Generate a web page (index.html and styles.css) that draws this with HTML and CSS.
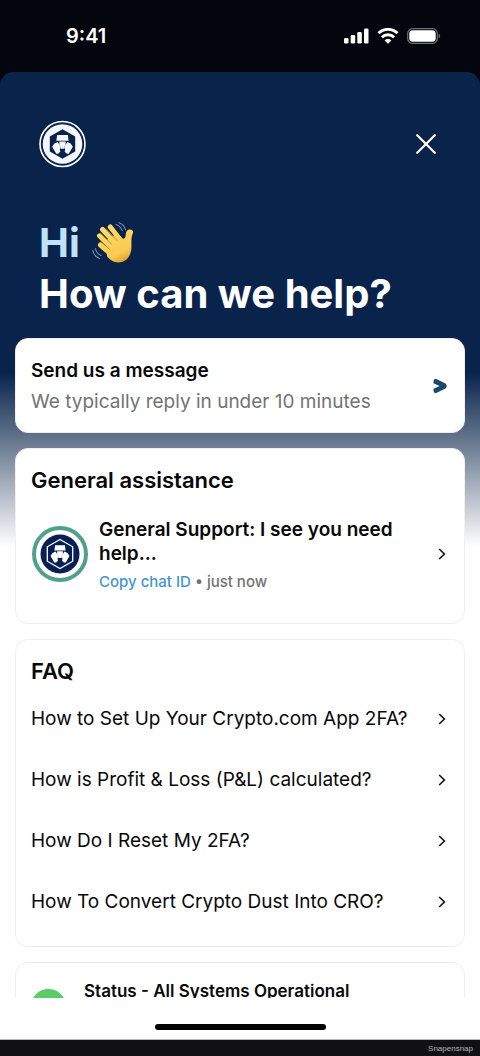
FILE: index.html
```html
<!DOCTYPE html>
<html lang="en">

<head>
    <meta charset="UTF-8">
    <meta name="viewport" content="width=device-width, initial-scale=1.0">
    <title>Help</title>
    <link rel="stylesheet" href="styles.css">
</head>

<body>
    <!-- Shared icons -->
    <svg class="sprite" aria-hidden="true">
        <symbol id="chevron" viewBox="0 0 8 12">
            <path d="M1.2 1 6.4 6 1.2 11" fill="none" stroke="#111" stroke-width="1.6" />
        </symbol>
        <symbol id="lion" viewBox="0 0 24 26">
            <path d="M6.400 3.500h11.200l.8 6H5.600z" />
            <path d="M8.700 10.500h6.600v3.500l-1.200 1.500V18H9.900v-2.500L8.700 14z" />
            <path d="M3.500 12.500 7 10.800l3.100 5.200-.9 2.600.5 2.400-2.200 2.200H5.500L1.200 15.800z" />
            <path d="M20.500 12.500 17 10.800l-3.100 5.200.9 2.600-.5 2.400 2.200 2.200h2l4.300-7.400z" />
        </symbol>
    </svg>

    <div class="status-bar">
        <span class="time">9:41</span>
        <div class="indicators">
            <svg width="25" height="16" viewBox="0 0 25 16" fill="#fff">
                <rect x="0" y="10" width="4.500" height="5.500" rx="1.300" />
                <rect x="6.700" y="7" width="4.500" height="8.500" rx="1.300" />
                <rect x="13.300" y="4" width="4.500" height="11.500" rx="1.300" />
                <rect x="20" y="0.500" width="4.500" height="15" rx="1.300" />
            </svg>
            <svg width="22" height="16" viewBox="0 0 22 16" fill="none" stroke="#fff" stroke-width="2.900">
                <path d="M1.500 5.300a13.400 13.400 0 0 1 19 0" />
                <path d="M4.900 9.200a8.700 8.700 0 0 1 12.200 0" />
                <path d="M11 15.800 7.600 12.400a4.800 4.800 0 0 1 6.800 0z" fill="#fff" stroke="none" />
            </svg>
            <svg width="34" height="16" viewBox="0 0 34 16">
                <rect x="0.700" y="0.700" width="29.600" height="14.600" rx="4.800" fill="none" stroke="#707277" stroke-width="1.200" />
                <rect x="2.300" y="2.300" width="26.400" height="11.400" rx="3.500" fill="#fff" />
                <path d="M31.700 5.500q3 2.500 0 5z" fill="#707277" />
            </svg>
        </div>
    </div>

    <main class="sheet">
        <header class="top">
            <svg class="logo" viewBox="0 0 48 48">
                <circle cx="24.500" cy="24" r="22.500" fill="none" stroke="#fff" stroke-width="1.600" />
                <circle cx="24.500" cy="24" r="19.800" fill="#f4f8fd" />
                <path d="M24.500 9.300 37.200 16.600v14.800L24.500 38.700 11.800 31.400V16.600z" fill="#09234d" />
                <use href="#lion" x="13" y="11.500" width="23" height="25" fill="#f4f8fd" />
            </svg>
            <button class="close" type="button" aria-label="Close">
                <svg width="20" height="20" viewBox="0 0 20 20">
                    <path d="M1.200 1.200l17.600 17.600M18.800 1.200 1.200 18.800" stroke="#fff" stroke-width="2.200" stroke-linecap="round" />
                </svg>
            </button>
        </header>

        <h1 class="greeting">
            <span class="hi">Hi
                <svg class="wave" viewBox="0 0 42 42" role="img" aria-label="waving hand">
                    <defs>
                        <linearGradient id="skin" gradientUnits="userSpaceOnUse" x1="10" y1="5" x2="30" y2="42">
                            <stop offset="0" stop-color="#ffdc6c" />
                            <stop offset="0.75" stop-color="#fbca50" />
                            <stop offset="1" stop-color="#dc9a30" />
                        </linearGradient>
                    </defs>
                    <g stroke="url(#skin)" stroke-width="5" stroke-linecap="round">
                        <path d="M7.500 13.800 22 28M10.500 7.500 26 24M18.300 5 30 20M8.500 23 20 33" />
                    </g>
                    <path d="M14 18.500 25 11.500l5.500 5c1.800.7 3-.7 3.200-3.200.2-3.500 1.300-5.800 4-5.800 3 0 4 1.800 3 4.200-1.800 4.300-1.100 8.300-1.300 14C39 35.500 33 40.500 26.500 40.500c-5 0-8.500-3-11.500-6z" fill="url(#skin)" />
                    <path d="M8.500 11.300 20 22.500M14 6.800 25 18.500M8.500 19l9 8.300" fill="none" stroke="#b98425" stroke-width="0.900" stroke-linecap="round" />
                    <g fill="none" stroke="#8190a5" stroke-width="1.100" stroke-linecap="round">
                        <path d="M24 2.500c3 1 5 3 6.200 6M27 .7c3.500 1.200 5.600 3.600 6.500 7M3.500 26.500c.5 3.500 2.200 5.600 5.500 7M.8 28.500C1.500 32.500 3.700 35 7.500 36.500" />
                    </g>
                </svg>
            </span>
            <span class="question">How can we help?</span>
        </h1>

        <a class="card message" href="#message">
            <span class="message-text">
                <strong class="item-title">Send us a message</strong>
                <span class="reply-time">We typically reply in under 10 minutes</span>
            </span>
            <svg class="send" viewBox="0 0 14 16">
                <path d="M2.800.8 12.500 5.500q2.500 2.500 0 5L2.800 15.200Q.5 15 .5 12.800V10.800L6.500 8 .5 5.200V3.200Q.5 1 2.800.8z" fill="#1b4868" />
            </svg>
        </a>

        <section class="card assistance">
            <h2>General assistance</h2>
            <div class="chat">
                <svg class="avatar" viewBox="0 0 56 56">
                    <circle cx="28" cy="28" r="26" fill="#fff" stroke="#4fa18b" stroke-width="4" />
                    <circle cx="28" cy="28" r="19.500" fill="#071f55" />
                    <path d="M28 13.500 40.700 20.800v14.400L28 42.500 15.300 35.200V20.800z" fill="none" stroke="#fff" stroke-width="1.300" />
                    <use href="#lion" x="17.500" y="16" width="21" height="23" fill="#fff" />
                </svg>
                <div class="chat-text">
                    <a class="item-title" href="#chat">General Support: I see you need help...</a>
                    <p class="meta"><a href="#copy">Copy chat ID</a> • just now</p>
                </div>
                <svg class="chevron"><use href="#chevron" /></svg>
            </div>
        </section>

        <section class="card faq">
            <h2>FAQ</h2>
            <ul>
                <li><a href="#2fa">How to Set Up Your Crypto.com App 2FA? <svg class="chevron"><use href="#chevron" /></svg></a></li>
                <li><a href="#pnl">How is Profit &amp; Loss (P&amp;L) calculated? <svg class="chevron"><use href="#chevron" /></svg></a></li>
                <li><a href="#reset">How Do I Reset My 2FA? <svg class="chevron"><use href="#chevron" /></svg></a></li>
                <li><a href="#dust">How To Convert Crypto Dust Into CRO? <svg class="chevron"><use href="#chevron" /></svg></a></li>
            </ul>
        </section>

        <section class="card system">
            <span class="dot"></span>
            <span class="system-text">Status - All Systems Operational</span>
        </section>
    </main>

    <div class="home-area">
        <div class="home-bar"></div>
    </div>
    <footer class="credit">Snapensnap</footer>
</body>

</html>
```
FILE: styles.css
```css
* {
    box-sizing: border-box;
}

body {
    margin: 0;
    height: 100vh;
    display: flex;
    flex-direction: column;
    background-color: #04060d;
    color: #080808;
    font-family: Inter, "Liberation Sans", sans-serif;
}

h1,
h2,
p,
ul {
    margin: 0;
    padding: 0;
}

a {
    color: inherit;
    text-decoration: none;
}

svg {
    display: block;
    flex-shrink: 0;
}

.sprite {
    position: absolute;
    width: 0;
    height: 0;
}

/* Status bar */
.status-bar {
    flex: 0 0 72px;
    display: flex;
    justify-content: space-between;
    align-items: center;
    padding: 0 39px 0 66px;
    color: #fff;
}

.time {
    font-size: 20px;
    font-weight: 600;
}

.indicators {
    display: flex;
    gap: 8px;
}

/* Sheet */
.sheet {
    flex: 1;
    min-height: 0;
    overflow: hidden;
    display: flex;
    flex-direction: column;
    gap: 15px;
    padding: 48px 15px 0;
    border-radius: 14px 14px 0 0;
    background: linear-gradient(#09234b 300px, #68788f 370px, #fff 475px);
}

.sheet > * {
    flex-shrink: 0;
}

.top {
    display: flex;
    justify-content: space-between;
    align-items: center;
    padding: 0 24px 0 23px;
}

.logo {
    width: 48px;
    height: 48px;
}

.close {
    padding: 5px;
    border: 0;
    background: none;
}

.greeting {
    padding: 34px 24px 4px;
    font-size: 40px;
    font-weight: 700;
    line-height: 51px;
    color: #fff;
}

.hi {
    display: flex;
    align-items: center;
    gap: 12px;
    color: #bfe2ff;
}

.wave {
    width: 42px;
    height: 42px;
}

.question {
    display: block;
}

/* Cards */
.card {
    padding: 16px 15px;
    border: 1px solid #efefef;
    border-radius: 13px;
    background-color: #fff;
}

h2 {
    font-size: 22px;
    font-weight: 600;
    line-height: 30px;
}

.item-title {
    display: block;
    font-size: 19px;
    font-weight: 600;
    line-height: 24px;
}

.chevron {
    width: 8px;
    height: 12px;
}

.message {
    display: flex;
    justify-content: space-between;
    align-items: center;
    padding-right: 17px;
}

.message-text {
    padding-top: 4px;
}

.reply-time {
    display: block;
    padding-top: 4px;
    font-size: 19px;
    line-height: 29px;
    color: #737373;
}

.send {
    width: 14px;
    height: 16px;
}

.assistance {
    padding-bottom: 29px;
}

.chat {
    display: flex;
    align-items: center;
    gap: 11px;
    padding: 18px 3px 0 1px;
}

.avatar {
    width: 56px;
    height: 56px;
}

.chat-text {
    flex: 1;
    padding-top: 5px;
}

.meta {
    padding-top: 4px;
    font-size: 15px;
    font-weight: 500;
    line-height: 24px;
    color: #737373;
}

.meta a {
    color: #4495d1;
}

.faq {
    padding-bottom: 14px;
}

.faq ul {
    margin-top: 2px;
    list-style: none;
}

.faq a {
    display: flex;
    justify-content: space-between;
    align-items: center;
    height: 61px;
    padding-right: 3px;
    font-size: 19px;
}

.system {
    display: flex;
    align-items: flex-start;
    gap: 18px;
}

.dot {
    width: 35px;
    height: 35px;
    margin-top: 10px;
    border-radius: 50%;
    background-color: #5bcb66;
}

.system-text {
    font-size: 17px;
    font-weight: 600;
    line-height: 24px;
}

/* Bottom */
.home-area {
    flex: 0 0 42px;
    display: flex;
    justify-content: center;
    align-items: center;
    padding-top: 17px;
    border-bottom: 1px solid #b8b8b8;
    background-color: #fff;
}

.home-bar {
    width: 171px;
    height: 6px;
    border-radius: 3px;
    background-color: #000;
}

.credit {
    flex: 0 0 16px;
    padding-right: 7px;
    background-color: #111114;
    color: #b5b5b5;
    font-family: "Liberation Sans", sans-serif;
    font-size: 8px;
    line-height: 18px;
    height: 16px;
    min-height: 0;
    overflow: hidden;
    text-align: right;
}
```
